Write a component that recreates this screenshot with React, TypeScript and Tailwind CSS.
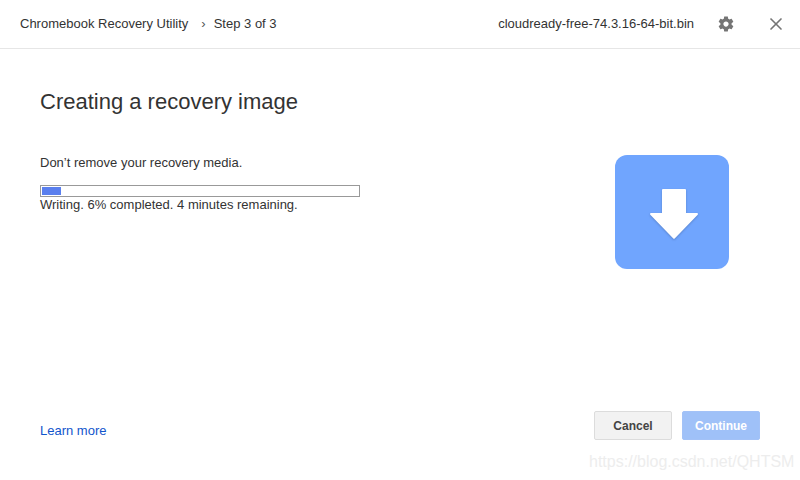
import React from 'react';
import { X } from 'lucide-react';

const App = () => {
    return (
        <div className="w-[800px] h-[480px] bg-white flex flex-col relative overflow-hidden font-['Liberation_Sans',Arial,sans-serif] text-[#333]">
            {/* Header */}
            <div className="h-[49px] shrink-0 border-b border-[#e6e6e6] flex items-center pl-5 pr-[14px] text-[13px] text-[#333]">
                <span>Chromebook Recovery Utility</span>
                <span className="ml-[13px] mr-[8px] text-[#555]">›</span>
                <span>Step 3 of 3</span>
                <span className="ml-auto">cloudready-free-74.3.16-64-bit.bin</span>
                <svg viewBox="0 0 24 24" className="ml-[23px] w-[18px] h-[18px] fill-[#757575]">
                    <path d="M19.43 12.98c.04-.32.07-.64.07-.98s-.03-.66-.07-.98l2.11-1.65c.19-.15.24-.42.12-.64l-2-3.46c-.12-.22-.39-.3-.61-.22l-2.49 1c-.52-.4-1.08-.73-1.69-.98l-.38-2.65C14.46 2.18 14.25 2 14 2h-4c-.25 0-.46.18-.49.42l-.38 2.65c-.61.25-1.17.59-1.69.98l-2.49-1c-.23-.09-.49 0-.61.22l-2 3.46c-.13.22-.07.49.12.64l2.11 1.65c-.04.32-.07.65-.07.98s.03.66.07.98l-2.11 1.65c-.19.15-.24.42-.12.64l2 3.46c.12.22.39.3.61.22l2.49-1c.52.4 1.08.73 1.69.98l.38 2.65c.03.24.24.42.49.42h4c.25 0 .46-.18.49-.42l.38-2.65c.61-.25 1.17-.59 1.69-.98l2.49 1c.23.09.49 0 .61-.22l2-3.46c.12-.22.07-.49-.12-.64l-2.11-1.65zM12 15.5c-1.93 0-3.5-1.57-3.5-3.5s1.57-3.5 3.5-3.5 3.5 1.57 3.5 3.5-1.57 3.5-3.5 3.5z" />
                </svg>
                <X size={20} strokeWidth={2} className="ml-[31px] text-[#757575]" />
            </div>

            {/* Content */}
            <div className="flex-1 flex pl-10 pr-[71px]">
                <div className="w-[320px]">
                    <h1 className="mt-[40px] text-[22px] leading-[26px] text-[#333] font-normal">Creating a recovery image</h1>
                    <p className="mt-[40px] text-[13px] leading-[16px]">Don’t remove your recovery media.</p>
                    <div className="mt-[14px] h-[12px] border border-[#999] p-px bg-white">
                        <div className="h-full w-[19px] bg-[#5a7fee]" />
                    </div>
                    <p className="text-[13px] leading-[16px] mt-0">Writing. 6% completed. 4 minutes remaining.</p>
                </div>
                <div className="ml-auto mt-[106px] w-[114px] h-[114px] rounded-[12px] bg-[#70a5fe] flex items-center justify-center">
                    <svg viewBox="0 0 48 50" className="ml-[4px] mt-[4px] w-[48px] h-[50px] fill-white drop-shadow-[0_1px_1px_rgba(0,0,0,0.2)]">
                        <path d="M12 1 a1 1 0 0 1 1-1 h22 a1 1 0 0 1 1 1 v23 h11 a1 1 0 0 1 .7 1.7 L24.7 49.5 a1 1 0 0 1-1.4 0 L.3 25.7 A1 1 0 0 1 1 24 h11 z" />
                    </svg>
                </div>
            </div>

            {/* Footer */}
            <div className="h-[69px] shrink-0 flex items-start pl-10 pr-10">
                <a className="mt-[12px] text-[13px] leading-[16px] text-[#1155cc]">Learn more</a>
                <button className="ml-auto w-[78px] h-[29px] rounded-[2px] border border-[#dcdcdc] bg-[#f2f2f2] text-[12px] font-bold text-[#444]">Cancel</button>
                <button className="ml-[10px] w-[78px] h-[29px] rounded-[2px] border border-[#a3c2f7] bg-[#9fc1f8] text-[12px] font-bold text-white">Continue</button>
            </div>

            {/* csdn watermark */}
            <span className="absolute left-[589px] top-[452px] text-[16px] leading-[20px] text-[#ededed]">https://blog.csdn.net/QHTSM</span>
        </div>
    );
};

export default App;
